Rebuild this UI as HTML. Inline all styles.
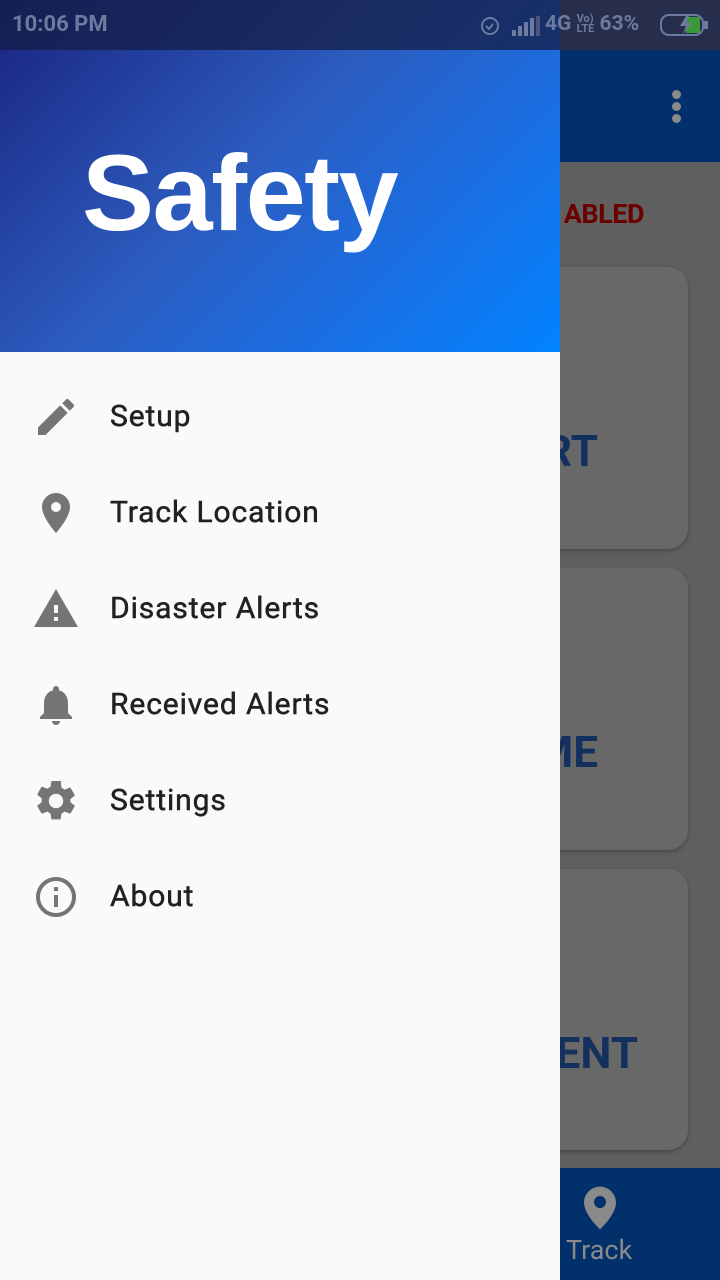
<!DOCTYPE html>
<html><head><meta charset="utf-8"><style>
*{margin:0;padding:0;box-sizing:border-box}
html,body{width:720px;height:1280px;overflow:hidden}
body{position:relative;background:#5f5f5f;font-family:"Roboto","Liberation Sans",sans-serif}
.tb{position:absolute;left:0;top:50px;width:720px;height:112px;background:#02306a}
.dots{position:absolute;left:672px;top:40px}
.dots i{display:block;width:9px;height:9px;border-radius:50%;background:#8a8a8a;margin-bottom:3px}
.abl{position:absolute;right:76px;top:198px;font-weight:bold;font-size:27px;color:#6a0000;letter-spacing:-0.5px}
.card{position:absolute;left:480px;width:208px;background:#686868;border-radius:20px;box-shadow:0 2px 4px rgba(0,0,0,.25)}
.ct{position:absolute;font-weight:bold;font-size:44px;color:#13305f}
.bn{position:absolute;left:0;top:1168px;width:720px;height:112px;background:#02306a;overflow:hidden}
.sb{position:absolute;left:0;top:0;width:720px;height:50px;background:rgba(20,30,70,.75);z-index:5}
.sb .t{position:absolute;left:12px;top:12px;color:#6d7aa0;font-weight:bold;font-size:22px}
.sb .r{position:absolute;left:545px;top:12px;color:#6d7aa0;font-weight:bold;font-size:21px}
.dr{position:absolute;left:0;top:0;width:560px;height:1280px;background:#fafafa;z-index:3}
.hd{position:absolute;left:0;top:0;width:560px;height:352px;background:linear-gradient(135deg,#1a237e 0%,#2c5cbf 45%,#1c6de0 70%,#0283ff 100%)}
.logo{position:absolute;left:82px;top:130px;color:#fff;font-size:108px;font-weight:bold;letter-spacing:-1.5px;font-family:"Liberation Sans",sans-serif}
.it{position:absolute;left:0;width:560px;height:96px}
.it svg{position:absolute;left:32px;top:24px}
.it span{position:absolute;left:110px;top:30px;font-size:30px;color:#212121;letter-spacing:0.9px;-webkit-text-stroke:0.5px #212121}
</style></head><body>
<div class="tb"><div class="dots"><i></i><i></i><i></i></div></div>
<div class="abl">ABLED</div>
<div class="card" style="top:267px;height:282px"><div class="ct" style="right:90px;top:158px">RT</div></div>
<div class="card" style="top:568px;height:282px"><div class="ct" style="right:90px;top:158px">ME</div></div>
<div class="card" style="top:869px;height:281px"><div class="ct" style="right:50px;top:158px">ENT</div></div>
<div class="bn">
<svg style="position:absolute;left:584px;top:18px" width="32" height="44" viewBox="0 0 24 32"><path d="M12 0C5.4 0 0 5.4 0 12c0 9 12 20 12 20s12-11 12-20C24 5.4 18.6 0 12 0zm0 16a4.5 4.5 0 1 1 0-9 4.5 4.5 0 0 1 0 9z" fill="#8a8a8a"/></svg>
<div style="position:absolute;left:566px;top:66px;color:#8a8a8a;font-size:27px">Track</div></div>
<div class="dr">
<div class="hd"><div class="logo">Safety</div></div>
<div class="it" style="top:369px"><svg width="48" height="48" viewBox="0 0 24 24"><path fill="#757575" d="M3 17.25V21h3.75L17.81 9.94l-3.75-3.75L3 17.25zM20.71 7.04a1 1 0 0 0 0-1.41l-2.34-2.34a1 1 0 0 0-1.41 0l-1.830 1.83 3.75 3.75 1.83-1.83z"/></svg><span>Setup</span></div>
<div class="it" style="top:465px"><svg width="48" height="48" viewBox="0 0 24 24"><path fill="#757575" d="M12 2C8.13 2 5 5.13 5 9c0 5.25 7 13 7 13s7-7.75 7-13c0-3.87-3.13-7-7-7zm0 9.5a2.5 2.5 0 1 1 0-5 2.5 2.5 0 0 1 0 5z"/></svg><span>Track Location</span></div>
<div class="it" style="top:561px"><svg width="48" height="48" viewBox="0 0 24 24"><path fill="#757575" d="M1 21h22L12 2 1 21zm12-3h-2v-2h2v2zm0-4h-2v-4h2v4z"/></svg><span>Disaster Alerts</span></div>
<div class="it" style="top:657px"><svg width="48" height="48" viewBox="0 0 24 24"><path fill="#757575" d="M12 22c1.1 0 2-.9 2-2h-4a2 2 0 0 0 2 2zm6-6v-5c0-3.07-1.64-5.64-4.5-6.32V4a1.5 1.5 0 0 0-3 0v.68C7.63 5.36 6 7.92 6 11v5l-2 2v1h16v-1l-2-2z"/></svg><span>Received Alerts</span></div>
<div class="it" style="top:753px"><svg width="48" height="48" viewBox="0 0 24 24"><path fill="#757575" d="M19.14 12.94a7.4 7.4 0 0 0 0-1.88l2.03-1.58a.49.49 0 0 0 .12-.61l-1.92-3.32a.49.49 0 0 0-.59-.22l-2.39.96a7 7 0 0 0-1.62-.94l-.36-2.54A.48.48 0 0 0 13.93 2h-3.84a.48.48 0 0 0-.48.41l-.36 2.54c-.59.24-1.13.57-1.62.94l-2.39-.96a.49.49 0 0 0-.59.22L2.73 8.47a.48.48 0 0 0 .12.61l2.030 1.58a7.4 7.4 0 0 0 0 1.88l-2.03 1.58a.49.49 0 0 0-.12.61l1.92 3.32c.12.22.37.29.59.22l2.39-.96c.5.38 1.03.7 1.62.94l.36 2.54c.05.24.24.41.48.41h3.84c.24 0 .44-.17.47-.41l.36-2.54a7 7 0 0 0 1.62-.94l2.39.96c.22.08.47 0 .59-.22l1.92-3.32a.48.48 0 0 0-.12-.61l-2.01-1.58zM12 15.6a3.6 3.6 0 1 1 0-7.2 3.6 3.6 0 0 1 0 7.2z"/></svg><span>Settings</span></div>
<div class="it" style="top:849px"><svg width="48" height="48" viewBox="0 0 24 24"><path fill="#757575" d="M11 7h2v2h-2zm0 4h2v6h-2zm1-9C6.48 2 2 6.48 2 12s4.48 10 10 10 10-4.48 10-10S17.52 2 12 2zm0 18c-4.41 0-8-3.59-8-8s3.59-8 8-8 8 3.59 8 8-3.59 8-8 8z"/></svg><span>About</span></div>
</div>
<div class="sb"><div class="t">10:06 PM</div>
<svg style="position:absolute;left:478px;top:13px" width="24" height="24" viewBox="0 0 24 24"><circle cx="12" cy="13" r="8" fill="none" stroke="#6d7aa0" stroke-width="2"/><path d="M8 13l3 3 4-5" fill="none" stroke="#6d7aa0" stroke-width="2"/></svg>
<svg style="position:absolute;left:512px;top:16px" width="30" height="20" viewBox="0 0 30 20"><rect x="0" y="14" width="4" height="6" fill="#6d7aa0"/><rect x="6" y="10" width="4" height="10" fill="#6d7aa0"/><rect x="12" y="6" width="4" height="14" fill="#6d7aa0"/><rect x="18" y="2" width="4" height="18" fill="#6d7aa0"/><rect x="24" y="0" width="4" height="20" fill="#4a5580"/></svg>
<div class="r">4G <span style="font-size:11px;display:inline-block;line-height:10px;vertical-align:middle">Vo)<br>LTE</span> 63%</div>
<svg style="position:absolute;left:660px;top:14px" width="50" height="22" viewBox="0 0 50 22"><rect x="1" y="1" width="42" height="20" rx="8" fill="none" stroke="#6d7aa0" stroke-width="2"/><rect x="44" y="7" width="4" height="8" fill="#6d7aa0"/><path d="M26 3h14v16H26z" fill="#3a9a3a"/><path d="M26 2l-6 10h6l-3 8 9-11h-6l3-7z" fill="#6d7aa0"/></svg>
</div>
</body></html>
